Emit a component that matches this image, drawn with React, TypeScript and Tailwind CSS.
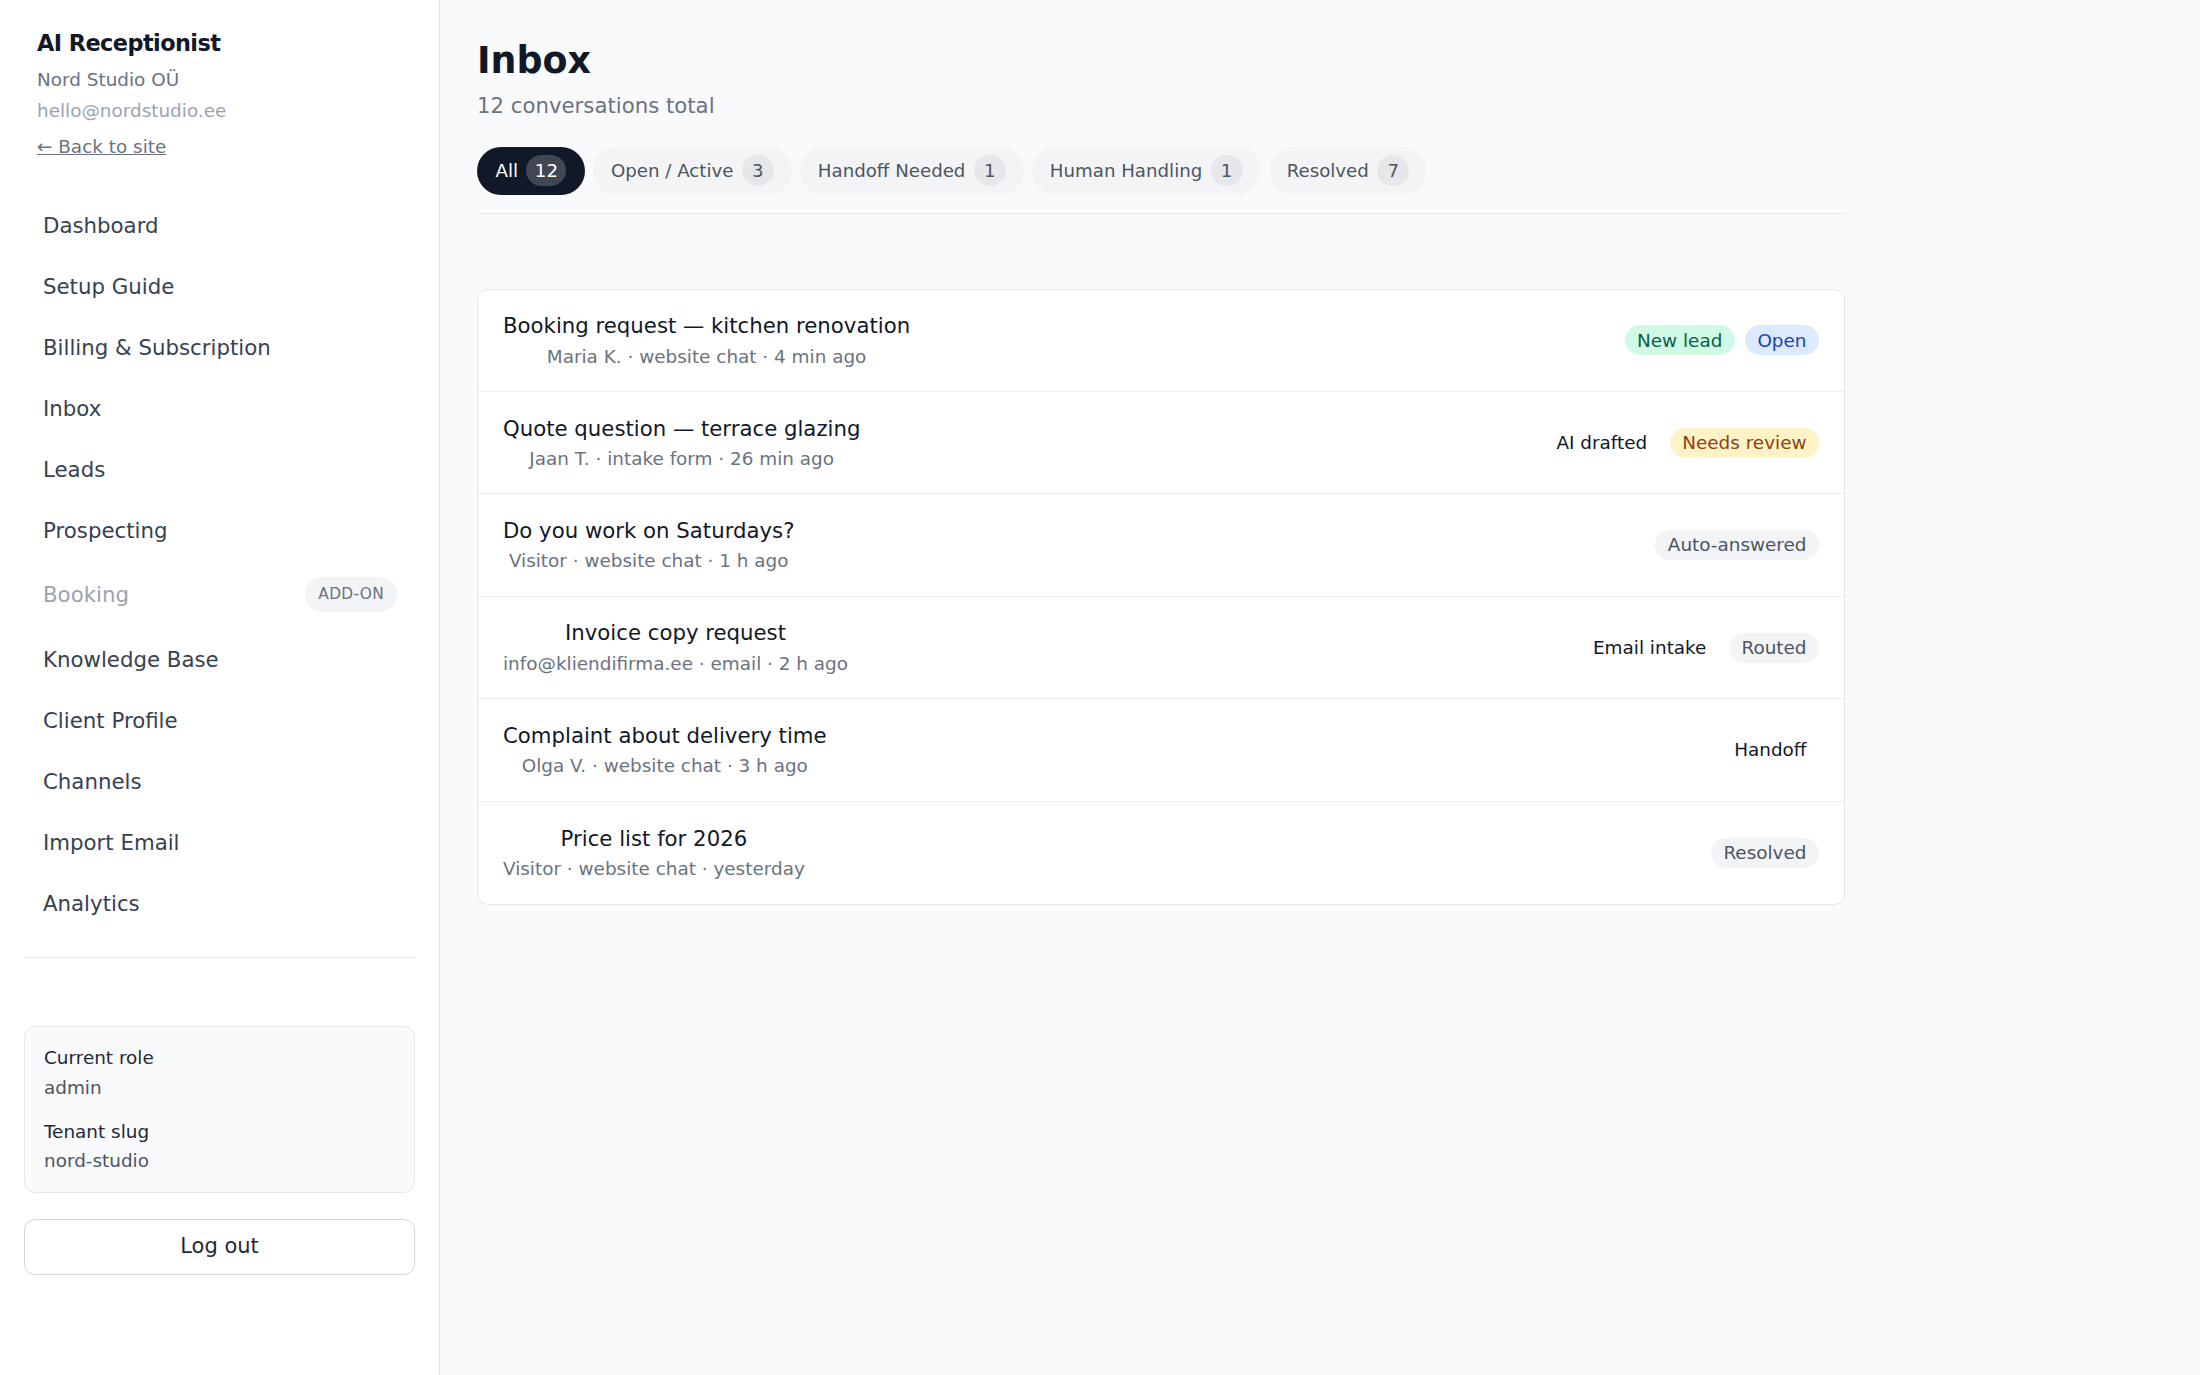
import React from 'react'

const navItems = [
  'Dashboard',
  'Setup Guide',
  'Billing & Subscription',
  'Inbox',
  'Leads',
  'Prospecting',
  'Booking',
  'Knowledge Base',
  'Client Profile',
  'Channels',
  'Import Email',
  'Analytics',
]

const tabs = [
  { label: 'All', count: 12, active: true },
  { label: 'Open / Active', count: 3 },
  { label: 'Handoff Needed', count: 1 },
  { label: 'Human Handling', count: 1 },
  { label: 'Resolved', count: 7 },
]

type Tag = { text: string; tone: 'green' | 'blue' | 'amber' | 'gray' | 'plain' }

const conversations: { title: string; meta: string; tags: Tag[] }[] = [
  {
    title: 'Booking request — kitchen renovation',
    meta: 'Maria K. · website chat · 4 min ago',
    tags: [
      { text: 'New lead', tone: 'green' },
      { text: 'Open', tone: 'blue' },
    ],
  },
  {
    title: 'Quote question — terrace glazing',
    meta: 'Jaan T. · intake form · 26 min ago',
    tags: [
      { text: 'AI drafted', tone: 'plain' },
      { text: 'Needs review', tone: 'amber' },
    ],
  },
  {
    title: 'Do you work on Saturdays?',
    meta: 'Visitor · website chat · 1 h ago',
    tags: [{ text: 'Auto-answered', tone: 'gray' }],
  },
  {
    title: 'Invoice copy request',
    meta: 'info@kliendifirma.ee · email · 2 h ago',
    tags: [
      { text: 'Email intake', tone: 'plain' },
      { text: 'Routed', tone: 'gray' },
    ],
  },
  {
    title: 'Complaint about delivery time',
    meta: 'Olga V. · website chat · 3 h ago',
    tags: [{ text: 'Handoff', tone: 'plain' }],
  },
  {
    title: 'Price list for 2026',
    meta: 'Visitor · website chat · yesterday',
    tags: [{ text: 'Resolved', tone: 'gray' }],
  },
]

const toneClass: Record<Tag['tone'], string> = {
  green: 'bg-[#d1fae5] text-[#065f46]',
  blue: 'bg-[#dbeafe] text-[#1e40af]',
  amber: 'bg-[#fef3c7] text-[#92400e]',
  gray: 'bg-[#f3f4f6] text-[#4b5563]',
  plain: 'text-[#111827]',
}

function Sidebar() {
  return (
    <aside className="w-[440px] shrink-0 bg-white border-r border-[#e5e7eb] px-[24px] pt-[28px]">
      <div className="pl-[13px]">
        <div className="text-[22.4px] leading-[30px] font-bold tracking-tight text-[#111827]">AI Receptionist</div>
        <div className="mt-[8.5px] text-[18.4px] leading-[26px] text-[#6b7280]">Nord Studio OÜ</div>
        <div className="mt-[5px] text-[18.4px] leading-[26px] text-[#9ca3af]">hello@nordstudio.ee</div>
        <a href="#" className="mt-[10px] block text-[18.4px] leading-[26px] text-[#6b7280] underline">
          ← Back to site
        </a>
      </div>

      <nav className="mt-[35px] flex flex-col">
        {navItems.map((item) =>
          item === 'Booking' ? (
            <div key={item} className="h-[68px] flex items-center justify-between pl-[19px] pr-[18px]">
              <span className="text-[21.3px] leading-[33px] text-[#9ca3af]">{item}</span>
              <span className="h-[35px] px-[13px] flex items-center rounded-full bg-[#f3f4f6] text-[15.4px] tracking-[0.02em] text-[#6b7280]">
                ADD-ON
              </span>
            </div>
          ) : (
            <a key={item} href="#" className="pl-[19px] pr-[18px] py-[14px] text-[21.3px] leading-[33px] text-[#374151]">
              {item}
            </a>
          )
        )}
      </nav>

      <div className="mt-[23px] border-t border-[#e5e7eb]" />

      <div className="mt-[68px] rounded-[11px] border border-[#e5e7eb] bg-[#f9fafb] px-[19px] py-[18px] text-[18.4px] leading-[26px]">
        <div className="text-[#1f2937]">Current role</div>
        <div className="mt-[4px] text-[#4b5563]">admin</div>
        <div className="mt-[18px] text-[#1f2937]">Tenant slug</div>
        <div className="mt-[3px] text-[#4b5563]">nord-studio</div>
      </div>

      <button className="mt-[26px] w-full h-[56px] rounded-[11px] border border-[#d1d5db] bg-white text-[21px] text-[#1f2937]">
        Log out
      </button>
    </aside>
  )
}

export default function App() {
  return (
    <div className="flex min-h-screen bg-[#f9fafb]" style={{ fontFamily: '"DejaVu Sans", sans-serif' }}>
      <Sidebar />

      <main className="flex-1 pt-[39px] pl-[37px]">
        <div className="w-[1368px]">
          <h1 className="text-[36.4px] leading-[44px] font-bold text-[#111827]">Inbox</h1>
          <p className="mt-[8px] text-[21.25px] leading-[30px] text-[#6b7280]">12 conversations total</p>

          <div className="mt-[25.7px] pb-[18px] border-b border-[#e5e7eb] flex gap-[8px]">
            {tabs.map((t) => (
              <button
                key={t.label}
                className={
                  t.active
                    ? 'h-[48px] px-[18.5px] rounded-full flex items-center gap-[8.4px] bg-[#111827] text-white text-[18.2px]'
                    : 'h-[48px] px-[18px] rounded-full flex items-center gap-[8.4px] bg-[#f3f4f6] text-[#4b5563] text-[18.2px]'
                }
              >
                <span>{t.label}</span>
                <span
                  className={
                    t.active
                      ? 'h-[31px] min-w-[32px] px-[8.4px] rounded-full flex items-center justify-center bg-white/20 text-white'
                      : 'h-[31px] min-w-[32px] px-[8.4px] rounded-full flex items-center justify-center bg-[#e5e7eb] text-[#4b5563]'
                  }
                >
                  {t.count}
                </span>
              </button>
            ))}
          </div>

          <div className="mt-[75px] rounded-[11px] border border-[#e5e7eb] bg-white divide-y divide-[#eceef1]">
            {conversations.map((c) => (
              <div key={c.title} className="h-[102.4px] px-[25px] flex items-center justify-between">
                <div className="text-center">
                  <div className="text-[21.25px] leading-[29px] text-[#111827]">{c.title}</div>
                  <div className="mt-[3.5px] text-[18.4px] leading-[26px] text-[#6b7280]">{c.meta}</div>
                </div>
                <div className="flex items-center gap-[10px]">
                  {c.tags.map((tag) => (
                    <span
                      key={tag.text}
                      className={`h-[30px] px-[12.5px] rounded-full flex items-center text-[18.4px] ${toneClass[tag.tone]}`}
                    >
                      {tag.text}
                    </span>
                  ))}
                </div>
              </div>
            ))}
          </div>
        </div>
      </main>
    </div>
  )
}
